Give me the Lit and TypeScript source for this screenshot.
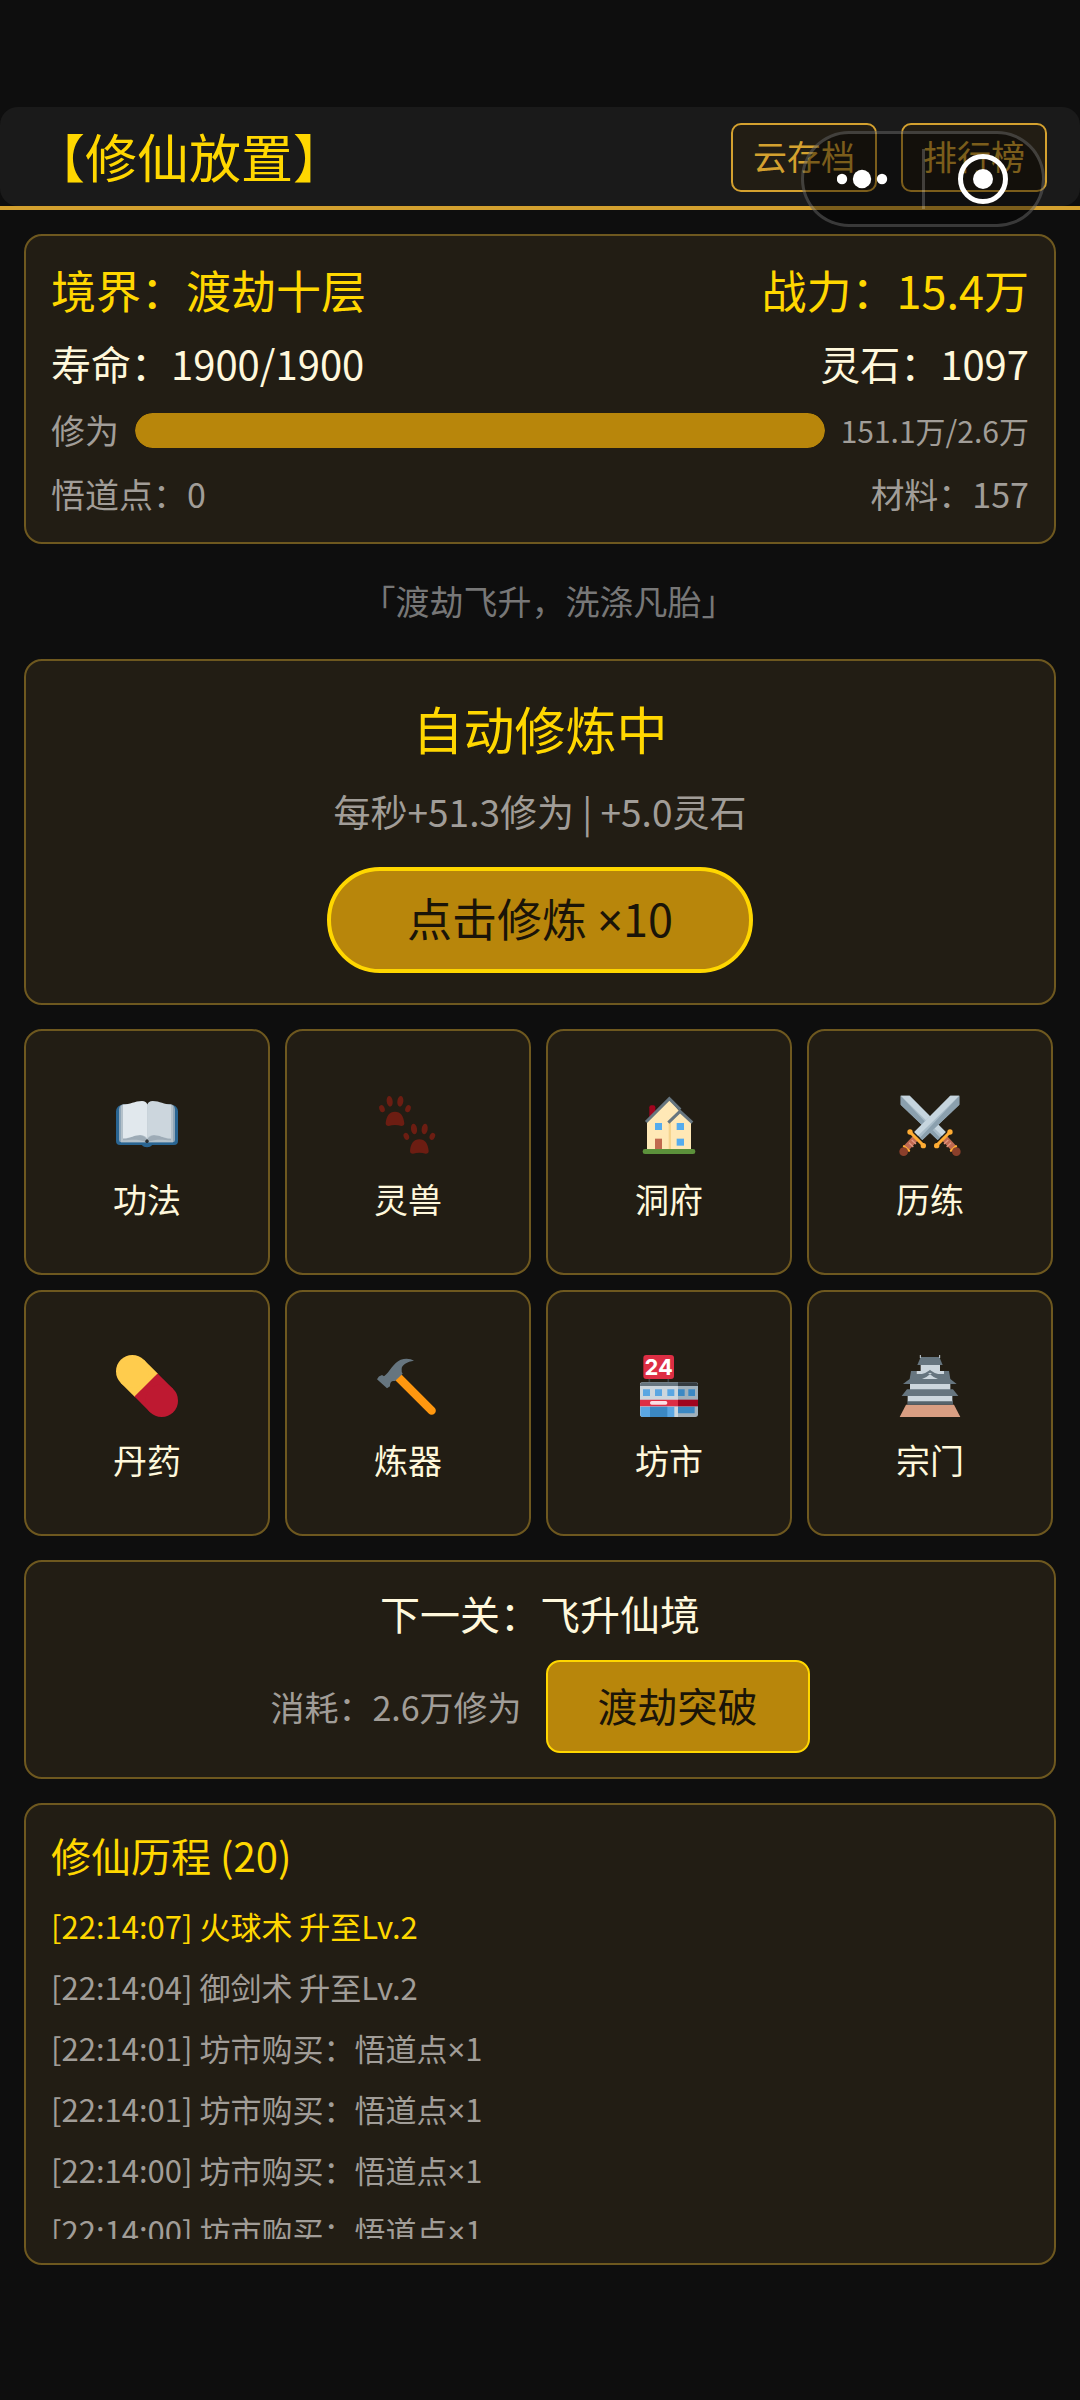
import { LitElement, html, svg, css, SVGTemplateResult } from "lit";
import { customElement, property, state } from "lit/decorators.js";
import { classMap } from "lit/directives/class-map.js";

interface Feature {
  label: string;
  viewBox: string;
  art: SVGTemplateResult;
}

interface LogEntry {
  time: string;
  text: string;
  count?: number;
  highlight?: boolean;
}

const book = svg`
  <path fill="#2a6592" d="M78 154Q79 140 92 136H250Q263 140 264 154V243Q264 255 252 255H187Q181 262 171 262Q161 262 155 255H90Q78 255 78 243Z"/>
  <path fill="#8fa6b8" d="M87 148Q88 136 98 133H244Q254 136 255 148V240Q255 247 248 247H94Q87 247 87 240Z"/>
  <path fill="#b4c1ca" d="M93 140Q94 135 99 134H243Q248 135 249 140V247H93Z"/>
  <path fill="#9dabb6" d="M99 237C122 236 130 226 150 226Q165 227 171 241Q177 227 192 226C212 226 220 236 243 237V241C220 241 205 234 171 247C137 234 122 241 99 241Z"/>
  <path fill="#e1e8ed" d="M99 134C120 134 134 123 156 123Q169 123 172 134V236Q165 225 150 225C132 225 120 236 99 235Z"/>
  <path fill="#ccd6dd" d="M243 134C222 134 210 123 188 123Q175 123 172 134V236Q177 225 192 225C210 225 222 236 243 235Z"/>
  <path fill="#292f33" d="M165 243L171 237L177 243L174 249H168Z"/>`;

const pawShape = svg`
  <path d="M890 190C892 168 901 155 918 155C935 155 944 168 946 190Q946 198 937 198Q918 192 899 198Q890 198 890 190Z"/>
  <ellipse cx="879" cy="146" rx="8" ry="11" transform="rotate(-22 879 146)"/>
  <ellipse cx="902" cy="124" rx="9" ry="16" transform="rotate(-8 902 124)"/>
  <ellipse cx="934" cy="124" rx="9" ry="16" transform="rotate(8 934 124)"/>
  <ellipse cx="957" cy="146" rx="8" ry="11" transform="rotate(22 957 146)"/>`;

const paws = svg`
  <g fill="#6c1d12">${pawShape}</g>
  <g fill="#6c1d12" transform="translate(73 83)">${pawShape}</g>`;

const house = svg`
  <rect x="118" y="136" width="18" height="40" rx="6" fill="#a0041e"/>
  <path fill="#ffe8b6" d="M178 118L111 184V270H243V184L210 156Z"/>
  <path fill="#f5d48e" d="M176 184H183V268H176Z"/>
  <path d="M108 186L178 116L211 149" fill="none" stroke="#66757f" stroke-width="9"/>
  <path d="M175 188L210 154L247 188" fill="none" stroke="#66757f" stroke-width="9"/>
  <rect x="135" y="189" width="21" height="21" fill="#55acee"/>
  <rect x="200" y="189" width="22" height="21" fill="#55acee"/>
  <rect x="200" y="236" width="22" height="21" fill="#55acee"/>
  <rect x="135" y="236" width="21" height="32" fill="#c1694f"/>
  <rect x="98" y="267" width="158" height="15" rx="7" fill="#5c913b"/>`;

const swordShape = svg`
  <path fill="#a9bcc8" d="M1045 107V134L934 240L910 216L1018 107Z"/>
  <path fill="#c6d5de" d="M1045 107H1018L910 216L921 227Z"/>
  <path fill="#8ba0ae" d="M1045 107V134L934 240L927 233Z"/>
  <path d="M914 234L886 264" stroke="#bf6952" stroke-width="20"/>
  <path d="M902 240L915 252M894 248L907 261" stroke="#e0967f" stroke-width="4"/>
  <path d="M879 259L894 272" stroke="#ffac33" stroke-width="7" stroke-linecap="round"/>
  <circle cx="878" cy="275" r="13" fill="#8a3f2b"/>
  <path d="M897 216L937 256" stroke="#ffac33" stroke-width="9"/>
  <circle cx="897" cy="216" r="8" fill="#ffac33"/>
  <circle cx="937" cy="257" r="8" fill="#ffac33"/>`;

const swords = svg`
  <g transform="translate(1914 0) scale(-1 1)">${swordShape}</g>
  <g>${swordShape}</g>`;

const pill = svg`
  <path d="M127 124L170 167" stroke="#ffcc4d" stroke-width="98"/>
  <circle cx="127" cy="124" r="49" fill="#ffcc4d"/>
  <path d="M168 165L215 212" stroke="#be1931" stroke-width="98"/>
  <circle cx="215" cy="212" r="49" fill="#be1931"/>`;

const hammer = svg`
  <path d="M927 141L1028 242" stroke="#ff970f" stroke-width="25" stroke-linecap="round"/>
  <path fill="#66757f" d="M864 148Q868 138 879 135L885 139C902 126 913 98 935 89C950 84 966 86 975 92C955 94 937 105 938 118Q937 127 941 131L918 153C906 151 903 158 903 169L894 175Z"/>`;

const store = svg`
  <path d="M118 145V160M175 145V160" stroke="#3a4247" stroke-width="5"/>
  <path fill="#ccd6dd" d="M90 164Q90 157 98 157H204V261H98Q90 261 90 253Z"/>
  <path fill="#9fb0bc" d="M204 157H256Q264 157 264 164V253Q264 261 256 261H204Z"/>
  <path fill="#66757f" d="M90 168Q90 157 98 157H204V168Z"/>
  <path fill="#343b40" d="M204 157H256Q264 157 264 168H204Z"/>
  <path fill="#5aa6e2" d="M99 178H120V198H99ZM135 178H156V198H135ZM172 178H193V198H172Z"/>
  <path fill="#3b88c3" d="M204 178H224V198H204ZM235 178H255V198H235Z"/>
  <path fill="#5aa6e2" d="M91 230H204V261H98Q91 261 91 253Z"/>
  <path fill="#3b88c3" d="M120 230H172V261H120ZM204 230H254V250H204Z"/>
  <path fill="#ccd6dd" d="M193 230H204V261H193Z"/>
  <path fill="#dd2e44" d="M90 209H204V229H90Z"/>
  <path fill="#a0041e" d="M204 209H264V229H204Z"/>
  <rect x="120" y="213" width="52" height="11" rx="5" fill="#fbdfe4"/>
  <rect x="100" y="75" width="92" height="72" rx="9" fill="#dd2e44"/>
  <text x="146" y="135" text-anchor="middle" font-family="Inter, 'Liberation Sans', sans-serif" font-weight="700" font-size="66" fill="#ffffff">24</text>`;

const castle = svg`
  <path fill="#d99e82" d="M885 224H1029L1048 261H866Z"/>
  <path fill="#57646c" d="M889 212H1026V224H889Z"/>
  <path fill="#ccd6dd" d="M890 196H1024V214H890ZM897 160H1018V180H897ZM929 103H987V132H929ZM916 123H999V133H916Z"/>
  <path fill="#66757f" d="M888 178H1026L1042 198H872Z"/>
  <path fill="#66757f" d="M900 123H916V132H999V123H1014L1018 147L1037 162H876L896 147Z"/>
  <path fill="#ccd6dd" d="M933 147Q948 142 957 133Q966 142 981 147Z"/>
  <path d="M926 138Q945 134 957 124Q969 134 988 138" fill="none" stroke="#66757f" stroke-width="7"/>
  <path fill="#66757f" d="M929 81H985L995 105H919Z"/>
  <path d="M928 75V84M986 75V84" stroke="#ccd6dd" stroke-width="3"/>`;

const FEATURES: Feature[] = [
  { label: "功法", viewBox: "78 102 186 186", art: book },
  { label: "灵兽", viewBox: "864 102 186 186", art: paws },
  { label: "洞府", viewBox: "84 102 186 186", art: house },
  { label: "历练", viewBox: "864 102 186 186", art: swords },
  { label: "丹药", viewBox: "78 75 186 186", art: pill },
  { label: "炼器", viewBox: "864 75 186 186", art: hammer },
  { label: "坊市", viewBox: "84 75 186 186", art: store },
  { label: "宗门", viewBox: "864 75 186 186", art: castle },
];

const LOGS: LogEntry[] = [
  { time: "22:14:07", text: "火球术 升至Lv.2", highlight: true },
  { time: "22:14:04", text: "御剑术 升至Lv.2" },
  { time: "22:14:01", text: "坊市购买：悟道点", count: 1 },
  { time: "22:14:01", text: "坊市购买：悟道点", count: 1 },
  { time: "22:14:00", text: "坊市购买：悟道点", count: 1 },
  { time: "22:14:00", text: "坊市购买：悟道点", count: 1 },
];

/** A multiplier such as ×10, with the sign set in the Latin face. */
const times = (n: number) => html`<span class="times">×</span>${n}`;

@customElement("feature-tile")
class FeatureTile extends LitElement {
  @property({ attribute: false }) feature!: Feature;

  static styles = css`
    :host {
      display: block;
    }
    .tile {
      display: flex;
      flex-direction: column;
      align-items: center;
      justify-content: center;
      gap: 20px;
      box-sizing: border-box;
      width: 100%;
      aspect-ratio: 1;
      margin: 0;
      padding: 12px 0 0;
      border: 2px solid #6e581f;
      border-radius: 18px;
      background: #221d14;
      color: #fff8dc;
      font: inherit;
      font-size: 34px;
      line-height: 46px;
    }
    .icon {
      display: block;
      width: 62px;
      height: 62px;
    }
  `;

  render() {
    const { label, viewBox, art } = this.feature;
    return html`
      <button class="tile" type="button">
        <svg class="icon" viewBox=${viewBox} aria-hidden="true">${art}</svg>
        <span>${label}</span>
      </button>
    `;
  }
}

@customElement("app-root")
class AppRoot extends LitElement {
  @state() private progress = 100;

  static styles = css`
    :host {
      display: block;
      box-sizing: border-box;
      min-height: 100vh;
      padding: 107px 0 24px;
      background: #0e0e0e;
      color: #fff8dc;
      font-family: "Noto Sans CJK SC", "Noto Sans", sans-serif;
      font-size: 40px;
    }
    h1,
    h2,
    p,
    ul {
      margin: 0;
      padding: 0;
      font-weight: 400;
    }
    button {
      margin: 0;
      font: inherit;
    }
    .times {
      font-family: "Noto Sans", sans-serif;
      line-height: 1;
    }
    .half {
      font-feature-settings: "halt";
    }
    .top {
      position: relative;
      border-bottom: 4px solid #d4a12f;
    }
    .bar {
      display: flex;
      align-items: center;
      justify-content: space-between;
      box-sizing: border-box;
      min-height: 99px;
      padding: 2px 33px 0;
      border-radius: 18px;
      background: #1a1a1a;
    }
    .brand {
      padding-bottom: 4px;
      color: #ffd700;
      font-size: 52px;
      line-height: 60px;
    }
    .actions {
      display: flex;
      gap: 24px;
    }
    .ghost {
      box-sizing: border-box;
      height: 69px;
      padding: 0 20px 4px;
      border: 2px solid #d4a12f;
      border-radius: 10px;
      background: #221d14;
      color: #d4a12f;
      font-size: 34px;
      line-height: 46px;
    }
    .capsule {
      position: absolute;
      top: 24px;
      right: 35px;
      display: flex;
      align-items: center;
      box-sizing: border-box;
      width: 244px;
      height: 96px;
      border: 3px solid rgba(255, 255, 255, 0.2);
      border-radius: 48px;
      background: rgba(0, 0, 0, 0.42);
    }
    .capsule-button {
      flex: 1;
      display: flex;
      align-items: center;
      justify-content: center;
      height: 100%;
      padding: 0;
      border: 0;
      background: none;
    }
    .capsule-icon {
      display: block;
      width: 52px;
      height: 52px;
    }
    .divider {
      width: 3px;
      height: 60px;
      background: rgba(255, 255, 255, 0.2);
    }
    main {
      display: flex;
      flex-direction: column;
      gap: 24px;
      padding: 24px;
    }
    .card {
      box-sizing: border-box;
      padding: 24px 25px;
      border: 2px solid #6e581f;
      border-radius: 18px;
      background: #221d14;
    }
    .status {
      display: flex;
      flex-direction: column;
      gap: 16px;
    }
    .row {
      display: flex;
      align-items: center;
      justify-content: space-between;
    }
    .lead {
      color: #ffd700;
      font-size: 45px;
      line-height: 60px;
    }
    .body {
      font-size: 40px;
      line-height: 54px;
    }
    .small {
      color: #a19d98;
      font-size: 34px;
      line-height: 48px;
    }
    .meter {
      gap: 16px;
    }
    .track {
      flex: 1;
      height: 35px;
      overflow: hidden;
      border-radius: 18px;
      background: #0e0e0e;
    }
    .fill {
      height: 100%;
      border-radius: 18px;
      background: #b8860b;
    }
    .amount {
      font-size: 30px;
    }
    .quote {
      padding: 10px 0 11px;
      color: #777777;
      font-size: 34px;
      line-height: 46px;
      text-align: center;
    }
    .training {
      display: flex;
      flex-direction: column;
      align-items: center;
      padding: 30px;
    }
    .training-title {
      color: #ffd700;
      font-size: 51px;
      line-height: 74px;
    }
    .rate {
      margin: 18px 0 28px;
      color: #a19d98;
      font-size: 37px;
      line-height: 56px;
    }
    .train {
      box-sizing: border-box;
      height: 106px;
      padding: 0 76px 4px;
      border: 4px solid #ffd700;
      border-radius: 53px;
      background: #b8860b;
      color: #1a1408;
      font-size: 45px;
      line-height: 62px;
    }
    .grid {
      display: grid;
      grid-template-columns: repeat(4, 1fr);
      gap: 15px;
      padding-right: 3px;
    }
    .next {
      display: flex;
      flex-direction: column;
      align-items: center;
      gap: 20px;
    }
    .cost {
      display: flex;
      align-items: center;
      gap: 24px;
    }
    .advance {
      box-sizing: border-box;
      height: 93px;
      padding: 0 50px 4px;
      border: 2px solid #ffd700;
      border-radius: 14px;
      background: #b8860b;
      color: #1a1408;
      font-size: 40px;
      line-height: 54px;
    }
    .history-title {
      color: #ffd700;
      font-size: 40px;
      line-height: 52px;
    }
    .log {
      height: 344px;
      margin-top: 14px;
      overflow: hidden;
      list-style: none;
      color: #a19d98;
      font-size: 31px;
      line-height: 61px;
    }
    .highlight {
      color: #ffd700;
    }
  `;

  render() {
    return html`
      <header class="top">
        <div class="bar">
          <h1 class="brand">【修仙放置】</h1>
          <div class="actions">
            <button class="ghost" type="button">云存档</button>
            <button class="ghost" type="button">排行榜</button>
          </div>
        </div>
        <div class="capsule">
          <button class="capsule-button" type="button" aria-label="更多">
            <svg class="capsule-icon" viewBox="0 0 52 52" fill="#ffffff">
              <circle cx="5" cy="26" r="5.2" />
              <circle cx="25" cy="26" r="9.2" />
              <circle cx="45" cy="26" r="5.2" />
            </svg>
          </button>
          <span class="divider"></span>
          <button class="capsule-button" type="button" aria-label="关闭">
            <svg class="capsule-icon" viewBox="0 0 52 52">
              <circle cx="26" cy="26" r="22.5" fill="none" stroke="#ffffff" stroke-width="5" />
              <circle cx="26" cy="26" r="10" fill="#ffffff" />
            </svg>
          </button>
        </div>
      </header>
      <main>
        <section class="card status">
          <div class="row lead"><span>境界：渡劫十层</span><span>战力：15.4万</span></div>
          <div class="row body"><span>寿命：1900/1900</span><span>灵石：1097</span></div>
          <div class="row small meter">
            <span id="meter-label">修为</span>
            <div
              class="track"
              role="progressbar"
              aria-labelledby="meter-label"
              aria-valuemin="0"
              aria-valuemax="100"
              aria-valuenow=${this.progress}
            >
              <div class="fill" style="width:${this.progress}%"></div>
            </div>
            <span class="amount">151.1万/2.6万</span>
          </div>
          <div class="row small"><span>悟道点：0</span><span>材料：157</span></div>
        </section>

        <p class="quote">「渡劫飞升，洗涤凡胎<span class="half">」</span></p>

        <section class="card training">
          <h2 class="training-title">自动修炼中</h2>
          <p class="rate">每秒+51.3修为 | +5.0灵石</p>
          <button class="train" type="button">点击修炼 ${times(10)}</button>
        </section>

        <nav class="grid">
          ${FEATURES.map((f) => html`<feature-tile .feature=${f}></feature-tile>`)}
        </nav>

        <section class="card next">
          <h2 class="body">下一关：飞升仙境</h2>
          <div class="cost">
            <span class="small">消耗：2.6万修为</span>
            <button class="advance" type="button">渡劫突破</button>
          </div>
        </section>

        <section class="card">
          <h2 class="history-title">修仙历程 (20)</h2>
          <ul class="log">
            ${LOGS.map(
              (l) => html`<li class=${classMap({ highlight: !!l.highlight })}>[${l.time}] ${l.text}${l.count ? times(l.count) : ""}</li>`
            )}
          </ul>
        </section>
      </main>
    `;
  }
}
